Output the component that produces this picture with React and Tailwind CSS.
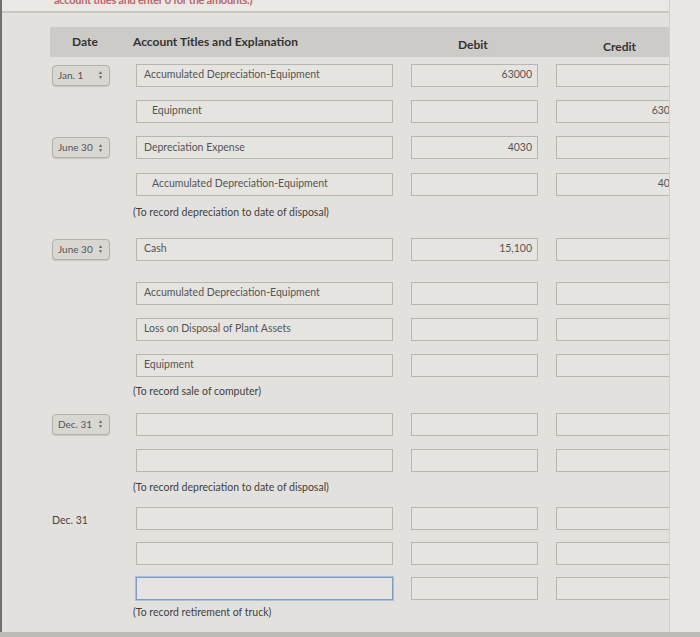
import React from "react";

const font = { fontFamily: "Lato, 'Open Sans', sans-serif" };

const DateSelect = ({ label }) => (
  <div className="ml-[2px] flex h-[21px] w-[58px] items-center justify-between rounded-[4px] border border-[#b3b1ac] bg-[#d9d7d2] pl-[5px] pr-[6px] text-[10px] text-[#555] shadow-[0_1px_1px_rgba(0,0,0,0.12)]">
    <span>{label}</span>
    <span className="flex flex-col items-center leading-none text-[#666]">
      <span className="text-[5px]">▲</span>
      <span className="text-[5px]">▼</span>
    </span>
  </div>
);

const Box = ({ w, text, right, indent, focus }) => (
  <div
    className={`flex h-[23px] shrink-0 items-center border bg-[#e6e4e0] text-[10.5px] text-[#555] ${
      focus ? "border-[#7d9cc4] shadow-[0_0_0_1px_#a9bfdc]" : "border-[#b8b6b1]"
    } ${right ? "justify-end pr-[5px]" : indent ? "pl-[15px]" : "pl-[7px]"} ${w}`}
  >
    {text}
  </div>
);

const Row = ({ h = "h-[36px]", mt = "", date, plainDate, acct, indent, debit, credit, focus }) => (
  <div className={`flex items-center ${h} ${mt}`}>
    <div className="w-[86px] shrink-0">
      {date && <DateSelect label={date} />}
      {plainDate && <span className="ml-[2px] text-[10.5px] text-[#444]">{plainDate}</span>}
    </div>
    <Box w="w-[257px]" text={acct} indent={indent} focus={focus} />
    <div className="w-[18px] shrink-0" />
    <Box w="w-[127px]" text={debit} right />
    <div className="w-[18px] shrink-0" />
    <Box w="w-[126px]" text={credit} right />
  </div>
);

const Note = ({ h, children }) => (
  <div className={`flex items-center pl-[83px] text-[10.5px] text-[#3f3f3f] ${h}`}>{children}</div>
);

export default function App() {
  return (
    <div style={font} className="relative flex h-[637px] w-[700px] overflow-hidden bg-[#e3e1dd]">
      <div className="w-[2px] shrink-0 bg-[#707070]" />
      <div className="flex w-[668px] shrink-0 flex-col overflow-hidden border-r border-[#d2d0cb]">
        <div className="h-[13px] overflow-hidden border-b-2 border-[#c9c7c2] bg-[#e9e8e4] pl-[52px]">
          <div className="-mt-[8px] text-[11px] font-bold tracking-tight text-[#b8676b]">
            account titles and enter 0 for the amounts.)
          </div>
        </div>
        <div className="pl-[48px]">
          <div className="mt-[14px] flex h-[30px] items-center bg-[#cccbc7] text-[12px] font-bold text-[#333]">
            <div className="w-[86px] pl-[22px]">Date</div>
            <div className="w-[275px] -ml-[3px]">Account Titles and Explanation</div>
            <div className="w-[145px] pl-[50px] pt-[6px]">Debit</div>
            <div className="pl-[50px] pt-[10px]">Credit</div>
          </div>

          <Row date="Jan. 1" acct="Accumulated Depreciation-Equipment" debit="63000" />
          <Row acct="Equipment" indent credit="6300" />
          <Row h="h-[37px]" date="June 30" acct="Depreciation Expense" debit="4030" />
          <Row acct="Accumulated Depreciation-Equipment" indent credit="403" />
          <Note h="h-[22px]">(To record depreciation to date of disposal)</Note>

          <Row mt="mt-[7px]" date="June 30" acct="Cash" debit="15,100" />
          <Row mt="mt-[8px]" acct="Accumulated Depreciation-Equipment" />
          <Row acct="Loss on Disposal of Plant Assets" />
          <Row acct="Equipment" />
          <Note h="h-[18px]">(To record sale of computer)</Note>

          <Row mt="mt-[5px]" date="Dec. 31" />
          <Row />
          <Note h="h-[20px]">(To record depreciation to date of disposal)</Note>

          <Row mt="mt-[2px]" plainDate="Dec. 31" />
          <Row h="h-[35px]" />
          <Row h="h-[34px]" focus />
          <Note h="h-[16px]">(To record retirement of truck)</Note>
        </div>
      </div>
      <div className="flex-1 bg-[#e8e7e3]" />
      <div className="absolute bottom-0 left-0 h-[5px] w-full bg-[#bdbbb6]" />
    </div>
  );
}
